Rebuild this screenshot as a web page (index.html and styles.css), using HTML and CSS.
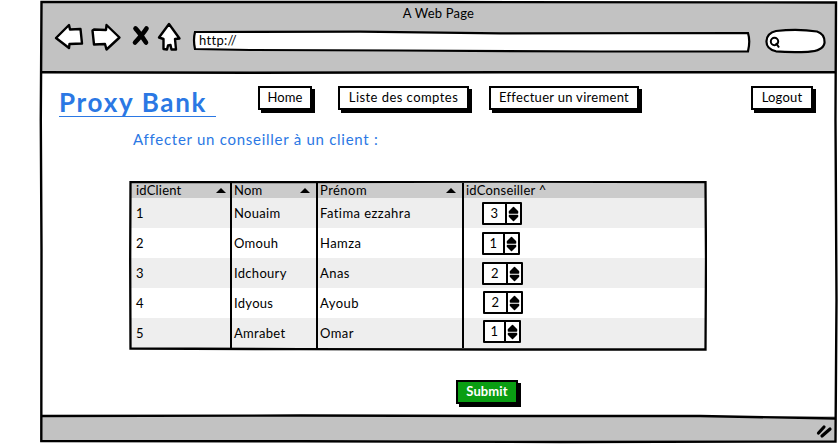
FILE: index.html
```html
<!DOCTYPE html>
<html lang="fr">
<head>
<meta charset="utf-8">
<title>Proxy Bank</title>
<link rel="stylesheet" href="styles.css">
</head>
<body>
<div class="window">
  <header class="chrome">
    <div class="title"><span>A Web Page</span></div>
    <div class="toolbar">
      <svg class="nav-icons" width="130" height="32" viewBox="53 20 130 32">
        <g fill="#fff" stroke="#000" stroke-width="2.4" stroke-linejoin="round">
          <path d="M56 38L69 25L70 29.500L80.500 29L82 43.500L69.500 44L69 48Z"/>
          <path d="M92.500 30.500L94 29.500L106 30L106.500 25L119.500 37.500L106.500 49.500L105 44L94 44.500Z"/>
          <path d="M169 24L159 37.500L163.500 39L163.500 49L167 49.500L168 45.500L170.500 45L171.500 49.500L176 49.500L175 39L179.500 38.500Z"/>
        </g>
        <path d="M135.500 28.500Q139 32 146 42.500M146.500 28.500Q143 34 135 42.500" fill="none" stroke="#000" stroke-width="4.600" stroke-linecap="round"/>
      </svg>
      <div class="url">
        <svg class="outline" width="560" height="24" viewBox="191 29 560 24"><path d="M195 32L360 31.700L500 33.300L748 33Q750.500 41 748 51.300L600 51.500L400 50.500L250 50L195 49Q193 40 195 32Z" fill="#fff" stroke="#000" stroke-width="2.200"/></svg>
        <span>http://</span>
      </div>
      <svg class="search" width="62" height="26" viewBox="765 28 62 26"><path d="M776 31Q798 28.500 817 31.500Q825 34 824.500 43Q823 51 808 51.800Q789 52.500 776 51.300Q766 49 766.500 41Q767 33 776 31Z" fill="#fff" stroke="#000" stroke-width="2.200"/><circle cx="774.500" cy="41.500" r="3.700" fill="none" stroke="#000" stroke-width="2"/><path d="M776 43L779 47.500" stroke="#000" stroke-width="2"/></svg>
    </div>
  </header>
  <main>
    <div class="topbar">
      <h1>Proxy Bank</h1>
      <nav>
        <button class="btn home">Home</button>
        <button class="btn list">Liste des comptes</button>
        <button class="btn transfer">Effectuer un virement</button>
        <button class="btn logout">Logout</button>
      </nav>
    </div>
    <h2>Affecter un conseiller à un client :</h2>
    <div class="table">
      <div class="row head"><div>idClient<i></i></div><div>Nom<i></i></div><div>Prénom<i></i></div><div>idConseiller ^</div></div>
      <div class="row"><div>1</div><div>Nouaim</div><div>Fatima ezzahra</div><div><span class="spin s1"><b>3</b><svg width="12" height="17"><path d="M5.500 1.500L9.500 5.500V7H1.500V5.500ZM5.500 14.500L9.500 10.500V9.500H1.500V10.500Z"/></svg></span></div></div>
      <div class="row"><div>2</div><div>Omouh</div><div>Hamza</div><div><span class="spin s2"><b>1</b><svg width="12" height="17"><path d="M5.500 1.500L9.500 5.500V7H1.500V5.500ZM5.500 14.500L9.500 10.500V9.500H1.500V10.500Z"/></svg></span></div></div>
      <div class="row"><div>3</div><div>Idchoury</div><div>Anas</div><div><span class="spin s3"><b>2</b><svg width="12" height="17"><path d="M5.500 1.500L9.500 5.500V7H1.500V5.500ZM5.500 14.500L9.500 10.500V9.500H1.500V10.500Z"/></svg></span></div></div>
      <div class="row"><div>4</div><div>Idyous</div><div>Ayoub</div><div><span class="spin s4"><b>2</b><svg width="12" height="17"><path d="M5.500 1.500L9.500 5.500V7H1.500V5.500ZM5.500 14.500L9.500 10.500V9.500H1.500V10.500Z"/></svg></span></div></div>
      <div class="row"><div>5</div><div>Amrabet</div><div>Omar</div><div><span class="spin s5"><b>1</b><svg width="12" height="17"><path d="M5.500 1.500L9.500 5.500V7H1.500V5.500ZM5.500 14.500L9.500 10.500V9.500H1.500V10.500Z"/></svg></span></div></div>
      <svg class="outline" width="578" height="170" viewBox="129 181 578 170"><path d="M130.500 182.200L300 182L500 181.500L705.500 182L706 260L705.500 349.500L500 349.500L300 349.200L130.500 348.500L130.200 260Z" fill="none" stroke="#000" stroke-width="2.300"/></svg>
    </div>
    <button class="btn submit">Submit</button>
  </main>
  <footer><svg width="18" height="15" viewBox="815 424 18 15"><path d="M818.500 433L824 427M822 436L830 429" stroke="#000" stroke-width="3.200" stroke-linecap="round"/></svg></footer>
  <svg class="frame" width="838" height="444" viewBox="0 0 838 444"><g fill="none" stroke="#000" stroke-width="2.400"><path d="M41.500 2L430 2L836 2.500L835.500 120L836.500 300L835.500 441.500L560 442L300 441.300L41.300 441L41.500 250L40.800 120Z"/><path d="M41 72.200L250 72.700L500 72.300L836 72.300"/><path d="M41 416L300 415.500L500 416L700 416L836 418.500"/></g></svg>
</div>
</body>
</html>
```
FILE: styles.css
```css
* { box-sizing: border-box; }
body { margin: 0; background: #fff; color: #000; font: 13px/16px Lato, "Open Sans", sans-serif; letter-spacing: .3px; overflow: hidden; }
.window { position: relative; width: 838px; height: 444px; padding: 2px 2px 2px 41px; display: grid; grid-template-rows: 70px 344px 26px; }
.frame { position: absolute; inset: 0; pointer-events: none; }
.outline { position: absolute; top: 0; left: 0; pointer-events: none; }
.chrome { background: #c2c2c2; }
.title { text-align: center; padding-top: 3px; height: 18px; letter-spacing: .2px; }
.toolbar { display: flex; padding-left: 12px; }
.nav-icons { flex: none; }
.url { position: relative; width: 560px; height: 24px; margin: 9px 0 0 8px; padding: 3px 0 0 8px; flex: none; }
.url span { position: relative; letter-spacing: .3px; }
.search { margin: 8px 0 0 14px; flex: none; }
main { padding-top: 14px; }
.topbar { display: flex; height: 39px; }
h1 { margin: 0 0 0 18px; width: 157px; height: 31px; border-bottom: 1px solid #2b78e4; color: #2b78e4; font-size: 26px; line-height: 33px; font-weight: 700; letter-spacing: 1.7px; white-space: nowrap; }
nav { display: flex; margin-left: 42px; }
.btn { height: 24px; padding: 0 0 1px; border: 2px solid #000; background: #fff; color: #000; box-shadow: 3px 3px #000; font: 13px/19px Lato, sans-serif; letter-spacing: .3px; white-space: nowrap; }
.home { width: 54px; letter-spacing: .1px; }
.list { width: 131px; margin-left: 26px; letter-spacing: .45px; }
.transfer { width: 150px; margin-left: 20px; }
.logout { width: 62px; margin-left: 112px; letter-spacing: .2px; }
h2 { margin: 4px 0 0 92px; height: 20px; color: #2b78e4; font-size: 15px; font-weight: 400; line-height: 20px; letter-spacing: .73px; }
.table { position: relative; width: 577px; height: 169px; margin: 32px 0 0 88px; padding: 2px 1px; }
.row { display: grid; grid-template-columns: 102px 86px 146px 241px; height: 30px; line-height: 30px; }
.row:nth-child(even) { background: #eee; }
.row > div { display: flex; align-items: center; padding-left: 2px; border-right: 2px solid #000; }
.row > div:nth-child(3) { letter-spacing: .45px; }
.row > div:first-child { padding-left: 6px; }
.row > div:last-child { border-right: 0; padding-left: 2px; }
.row.head { height: 15px; line-height: 15px; background: #cbcbcb; letter-spacing: .2px; }
.row.head > div:last-child { letter-spacing: .22px; }
.head i { margin: 0 4px 0 auto; border: solid transparent; border-width: 0 5px 5px; border-bottom-color: #000; }
.head > div:nth-child(2) i, .head > div:nth-child(3) i { margin-right: 6px; }
.spin { display: flex; width: 40px; height: 23px; border: 2px solid #000; border-radius: 1px; background: #fff; margin-left: 16px; }
.spin b { flex: 1; text-align: center; border-right: 2px solid #000; font-weight: 400; line-height: 18px; }
.spin svg { margin: 2px 0 0 1px; flex: none; }
.spin path { stroke: #000; stroke-width: 1.5; stroke-linejoin: round; }
.s2 { width: 38px; }
.s3 { width: 41px; }
.s4 { margin: -2px 0 0 17px; }
.s5 { width: 38px; margin: -3px 0 0 17px; }
.submit { display: block; width: 62px; margin: 30px 0 0 415px; background: #0a9e13; color: #fff; font-weight: 700; letter-spacing: .1px; }
footer { background: #c2c2c2; display: flex; justify-content: flex-end; padding: 8px 3px 0 0; }
```
